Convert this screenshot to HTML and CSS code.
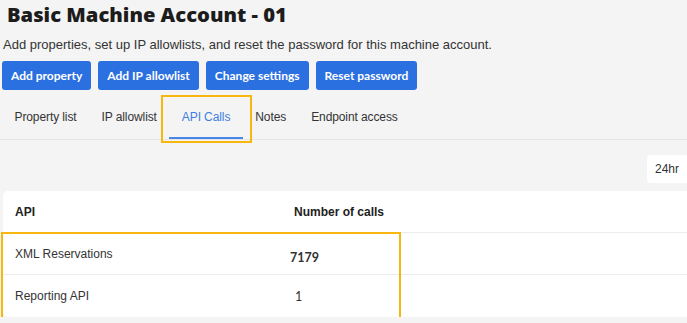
FILE: index.html
```html
<!DOCTYPE html>
<html lang="en">
<head>
  <meta charset="UTF-8">
  <meta name="viewport" content="width=device-width, initial-scale=1.0">
  <title>Basic Machine Account - 01</title>
  <link rel="stylesheet" href="styles.css">
</head>
<body>
  <h1>Basic Machine Account - 01</h1>
  <p class="intro">Add properties, set up IP allowlists, and reset the password for this machine account.</p>

  <div class="actions">
    <button>Add property</button>
    <button>Add IP allowlist</button>
    <button>Change settings</button>
    <button>Reset password</button>
  </div>

  <nav class="tabs">
    <a class="tab">Property list</a>
    <a class="tab">IP allowlist</a>
    <a class="tab active">API Calls</a>
    <a class="tab">Notes</a>
    <a class="tab">Endpoint access</a>
  </nav>

  <div class="toolbar">
    <div class="range">24hr</div>
  </div>

  <div class="card">
    <div class="row head">
      <span>API</span>
      <span>Number of calls</span>
    </div>
    <div class="rows">
      <div class="row">
        <span>XML Reservations</span>
        <span class="count first">7179</span>
      </div>
      <div class="row">
        <span>Reporting API</span>
        <span class="count">1</span>
      </div>
    </div>
  </div>
</body>
</html>
```

FILE: styles.css
```css
body {
  margin: 0;
  background-color: #f4f4f4;
  font-family: 'Liberation Sans', Arial, sans-serif;
  color: #333;
  overflow: hidden;
}
h1 {
  margin: 0;
  padding: 1px 0 0 7px;
  font-family: 'Open Sans', sans-serif;
  font-weight: 800;
  font-size: 20.2px;
  line-height: 26px;
  color: #1c1c1c;
}
.intro {
  margin: 10px 0 0 3px;
  font-size: 13px;
  line-height: 16px;
}
.actions {
  display: flex;
  gap: 7px;
  margin: 8px 0 0 2px;
}
button {
  background-color: #2b70e0;
  color: white;
  border: none;
  border-radius: 3px;
  height: 29px;
  padding: 0 9px;
  font-family: 'Lato', sans-serif;
  font-weight: bold;
  font-size: 12px;
}
.tabs {
  display: flex;
  margin-top: 6px;
  padding-left: 2px;
  border-bottom: 1px solid #e4e4e4;
}
.tab {
  position: relative;
  padding: 0 12.5px;
  height: 43px;
  line-height: 43px;
  font-size: 12px;
  letter-spacing: -0.1px;
  color: #333;
  box-sizing: border-box;
}
.tab.active {
  color: #3d7fe3;
  border-bottom: 2px solid #4a86e8;
}
.tab.active::after {
  content: '';
  position: absolute;
  left: -8px;
  right: -9px;
  top: -1px;
  bottom: -6px;
  border: 2px solid #f7b70f;
}
.toolbar {
  display: flex;
  justify-content: flex-end;
  margin-top: 15px;
}
.range {
  width: 32px;
  height: 28px;
  line-height: 28px;
  padding-left: 8px;
  background-color: white;
  border-radius: 4px 0 0 4px;
  font-size: 12px;
}
.card {
  margin: 8px 0 0 3px;
  background-color: white;
  border-radius: 5px 0 0 5px;
}
.row {
  display: grid;
  grid-template-columns: 279px 1fr;
  height: 41px;
  align-items: center;
  padding-left: 12px;
  font-size: 12px;
  border-bottom: 1px solid #ececec;
}
.row.head {
  font-weight: bold;
  color: #222;
}
.rows {
  position: relative;
}
.rows::after {
  content: '';
  position: absolute;
  left: -2px;
  top: -1px;
  width: 396px;
  bottom: -2px;
  border: 2px solid #f7b70f;
}
.count {
  font-family: 'Lato', sans-serif;
  font-size: 12.5px;
}
.count.first {
  font-weight: bold;
  padding-top: 8px;
  margin-left: -4px;
}
.count:not(.first) {
  margin-left: 1px;
}
.rows .row:last-child {
  border-bottom: none;
  height: 42px;
}
```
